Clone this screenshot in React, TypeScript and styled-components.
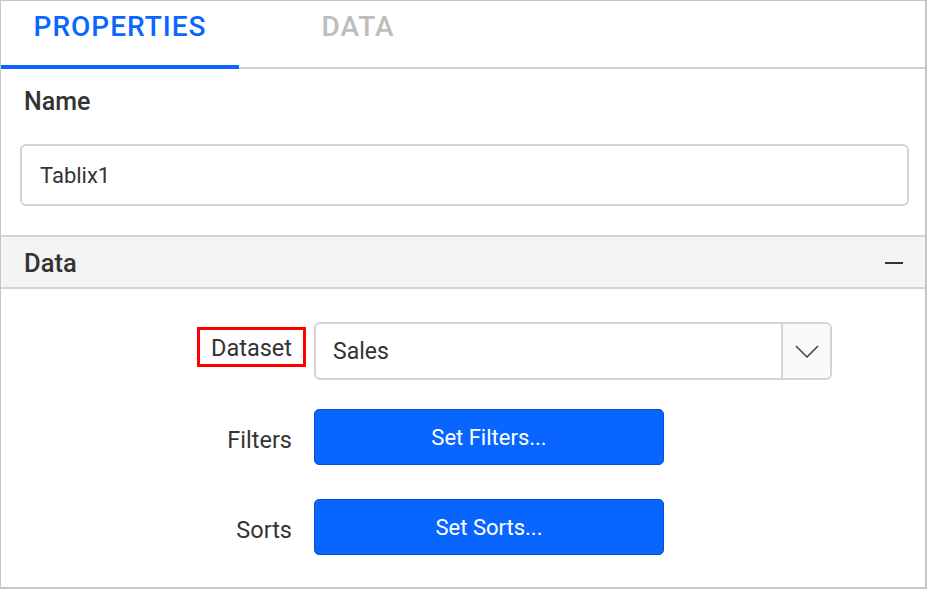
import React from "react";
import styled, { createGlobalStyle } from "styled-components";

const GlobalStyle = createGlobalStyle`
  html, body { margin: 0; padding: 0; background: #ffffff; }
  body { font-family: Roboto, "Liberation Sans", Arial, sans-serif; color: #333333; }
  * { box-sizing: border-box; }
`;

const Panel = styled.div`
  width: 927px;
  height: 589px;
  border-left: 1px solid #c6c6c6;
  border-top: 1px solid #c6c6c6;
  border-right: 2px solid #c6c6c6;
  border-bottom: 2px solid #c6c6c6;
  background: #fff;
  display: flex;
  flex-direction: column;
  overflow: hidden;
`;

const TabBar = styled.div`
  display: flex;
  height: 68px;
  border-bottom: 2px solid #d0d0d0;
`;

const Tab = styled.div<{ $active?: boolean }>`
  width: 238px;
  display: flex;
  justify-content: center;
  padding-top: 9px;
  font-size: 28px;
  line-height: 34px;
  font-weight: 500;
  letter-spacing: 1px;
  text-transform: uppercase;
  color: ${(p) => (p.$active ? "#0a66ff" : "#bdbdbd")};
  margin-bottom: ${(p) => (p.$active ? "-2px" : "0")};
  border-bottom: ${(p) => (p.$active ? "4px solid #0a66ff" : "none")};
  cursor: pointer;
`;

const NameSection = styled.div`
  padding: 19px 16px 29px 19px;
`;

const FieldTitle = styled.div`
  font-size: 25px;
  line-height: 28px;
  font-weight: 500;
  color: #333;
  padding-left: 4px;
`;

const TextBox = styled.div`
  margin-top: 28px;
  height: 62px;
  border: 2px solid #d4d4d4;
  border-radius: 6px;
  display: flex;
  align-items: center;
  padding-left: 18px;
  font-size: 22px;
  color: #333;
`;

const SectionHeader = styled.div`
  height: 54px;
  background: #f4f4f4;
  border-top: 2px solid #d4d4d4;
  border-bottom: 2px solid #d4d4d4;
  display: flex;
  align-items: center;
  justify-content: space-between;
  padding: 0 22px 0 23px;
`;

const SectionTitle = styled.div`
  font-size: 25.5px;
  line-height: 28px;
  font-weight: 500;
  color: #333;
  margin-top: 2px;
`;

const Minus = styled.div`
  width: 18px;
  height: 2px;
  background: #333;
  margin-top: 1px;
`;

const Body = styled.div`
  display: flex;
  flex-direction: column;
  padding-top: 33px;
`;

const Row = styled.div<{ $top?: number }>`
  display: flex;
  align-items: center;
  gap: 22px;
  margin-top: ${(p) => p.$top ?? 0}px;
`;

const LabelCell = styled.div`
  width: 291px;
  display: flex;
  justify-content: flex-end;
`;

const Label = styled.span<{ $marked?: boolean }>`
  position: relative;
  font-size: 23.5px;
  line-height: 28px;
  color: #333;
  margin-top: ${(p) => (p.$marked ? "0" : "6px")};
  margin-bottom: ${(p) => (p.$marked ? "6px" : "0")};
  &::after {
    content: "";
    display: ${(p) => (p.$marked ? "block" : "none")};
    position: absolute;
    left: -14px;
    right: -14px;
    top: -7px;
    bottom: -5px;
    border: 3px solid #ff0000;
  }
`;

const Select = styled.div`
  width: 518px;
  height: 58px;
  border: 2px solid #d4d4d4;
  border-radius: 6px;
  display: flex;
  overflow: hidden;
`;

const SelectValue = styled.div`
  flex: 1;
  display: flex;
  align-items: center;
  padding-left: 17px;
  font-size: 23px;
  color: #333;
`;

const SelectArrow = styled.div`
  width: 49px;
  border-left: 2px solid #d4d4d4;
  background: #fafafa;
  display: flex;
  align-items: center;
  justify-content: center;
`;

const BlueButton = styled.button`
  width: 350px;
  height: 56px;
  border: 1px solid #0052d6;
  border-radius: 5px;
  background: #0866ff;
  color: #ffffff;
  font-family: Roboto, "Liberation Sans", Arial, sans-serif;
  font-size: 22px;
  padding: 0;
  cursor: pointer;
`;

export default function App() {
  return (
    <>
      <GlobalStyle />
      <Panel>
        <TabBar>
          <Tab $active>Properties</Tab>
          <Tab>Data</Tab>
        </TabBar>
        <NameSection>
          <FieldTitle>Name</FieldTitle>
          <TextBox>Tablix1</TextBox>
        </NameSection>
        <SectionHeader>
          <SectionTitle>Data</SectionTitle>
          <Minus />
        </SectionHeader>
        <Body>
          <Row>
            <LabelCell>
              <Label $marked>Dataset</Label>
            </LabelCell>
            <Select>
              <SelectValue>Sales</SelectValue>
              <SelectArrow>
                <svg width="24" height="13" viewBox="0 0 24 13" fill="none">
                  <path d="M1 1 L12 12 L23 1" stroke="#3d4a5a" strokeWidth="1.6" />
                </svg>
              </SelectArrow>
            </Select>
          </Row>
          <Row $top={29}>
            <LabelCell>
              <Label>Filters</Label>
            </LabelCell>
            <BlueButton>Set Filters...</BlueButton>
          </Row>
          <Row $top={34}>
            <LabelCell>
              <Label>Sorts</Label>
            </LabelCell>
            <BlueButton>Set Sorts...</BlueButton>
          </Row>
        </Body>
      </Panel>
    </>
  );
}
